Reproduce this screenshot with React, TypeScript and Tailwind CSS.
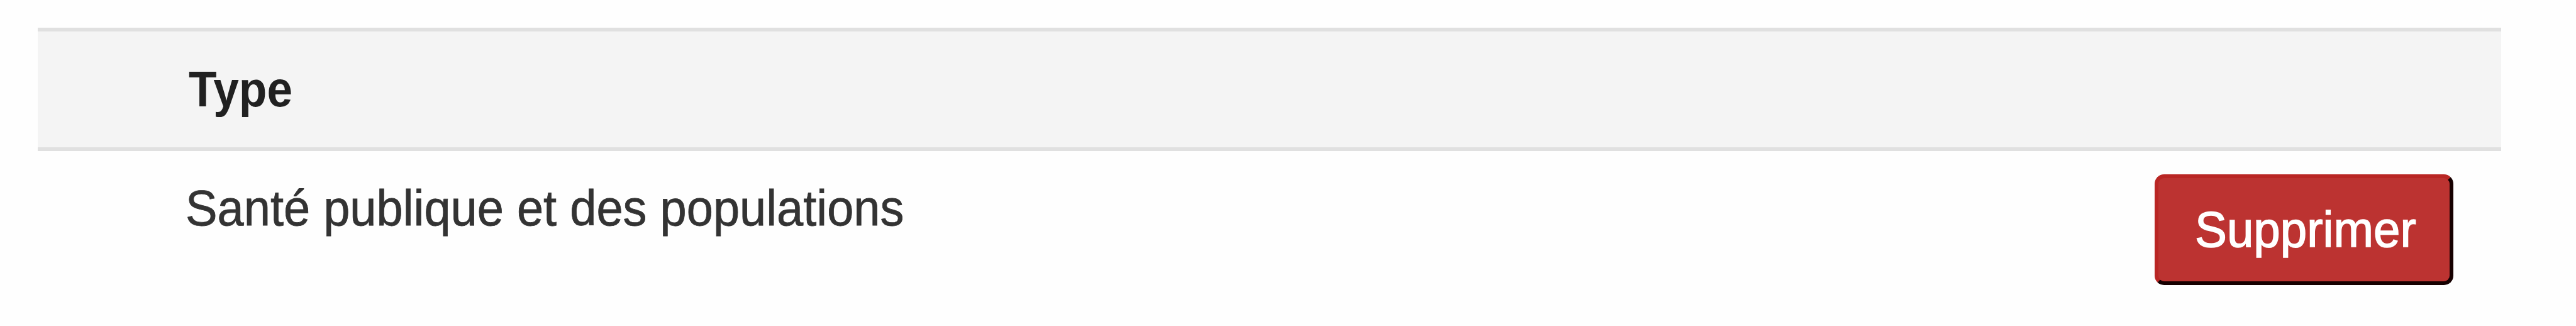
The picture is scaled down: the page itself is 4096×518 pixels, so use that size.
import React from 'react'
import clsx from 'clsx'

type Row = {
  id: number
  type: string
}

const rows: Row[] = [{ id: 1, type: 'Santé publique et des populations' }]

// Slightly condensed label used for every text of the table
function Label({
  children,
  className
}: {
  children: React.ReactNode
  className?: string
}) {
  return (
    <span
      className={clsx(
        "block origin-left whitespace-nowrap text-[79.4px] leading-[92px]",
        className
      )}
    >
      {children}
    </span>
  )
}

function DeleteButton() {
  return (
    <button
      type="button"
      className="h-[176px] w-[475px] rounded-[15px] border-[6px] border-t-[#b92624] border-r-[#160000] border-b-[#160000] border-l-[#b92624] bg-[#bc3331] pl-[58px] text-left text-white"
    >
      <Label className="scale-x-[0.961] [-webkit-text-stroke:1.5px_white]">Supprimer</Label>
    </button>
  )
}

export default function App() {
  return (
    <div className="h-[518px] w-[4096px] overflow-hidden bg-[#fefefe] pt-[44px] pl-[60px] font-['Liberation_Sans',Arial,sans-serif] text-[#333333]">
      <div className="w-[3917px]">
        <div className="flex h-[196px] items-center border-y-[6px] border-[#e0e0e0] bg-[#f4f4f4] pl-[240px]">
          <Label className="scale-x-[0.92] font-bold text-[#212121]">Type</Label>
        </div>
        {rows.map((row) => (
          <div key={row.id} className="flex items-start justify-between pt-[37px] pr-[76px] pl-[235px]">
            <Label className="mt-[8px] scale-x-[0.955] [-webkit-text-stroke:0.8px_#333333]">{row.type}</Label>
            <DeleteButton />
          </div>
        ))}
      </div>
    </div>
  )
}
